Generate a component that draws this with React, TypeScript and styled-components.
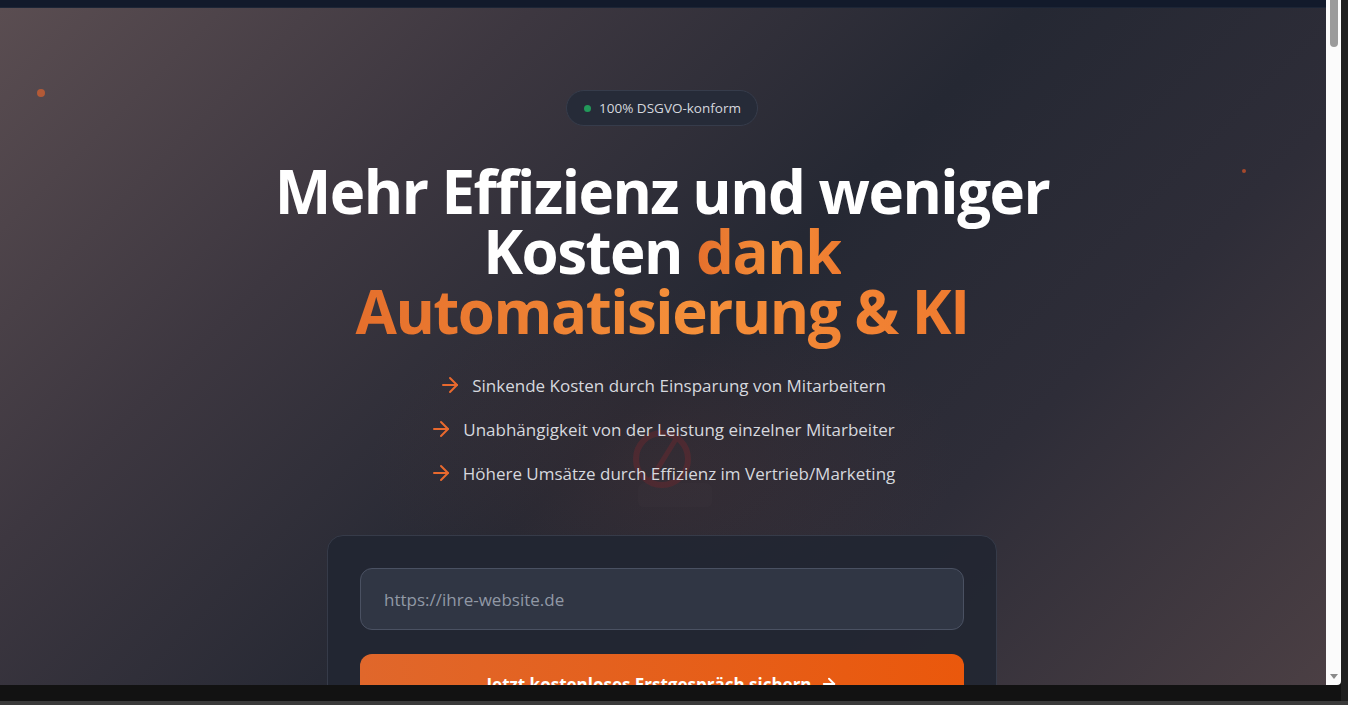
import React from "react";
import styled, { createGlobalStyle } from "styled-components";
import { ArrowRight } from "lucide-react";

const GlobalStyle = createGlobalStyle`
  html, body { margin: 0; padding: 0; background: #121212; overflow: hidden; }
  * { box-sizing: border-box; }
`;

const Screen = styled.div`
  display: grid;
  grid-template-columns: 1326px 15px 7px;
  grid-template-rows: 685px 16px 4px;
  width: 1348px;
  height: 705px;
  background: #121212;
`;

const Viewport = styled.div`
  grid-column: 1;
  grid-row: 1;
  overflow: hidden;
  display: flex;
  flex-direction: column;
  font-family: "Open Sans", "Noto Sans", sans-serif;
`;

const Scrollbar = styled.div`
  grid-column: 2;
  grid-row: 1;
  background: #fbfbfb;
  display: flex;
  flex-direction: column;
  justify-content: space-between;
  align-items: center;
  padding: 0 0 6px;
  border-bottom-right-radius: 4px;
`;

const Thumb = styled.div`
  width: 8px;
  height: 47px;
  background: #9b9b9b;
  border-radius: 0 0 4px 4px;
`;

const DownArrow = styled.div`
  width: 0;
  height: 0;
  border-left: 4px solid transparent;
  border-right: 4px solid transparent;
  border-top: 5px solid #8a8a8a;
`;

const SideStrip = styled.div`
  grid-column: 3;
  grid-row: 1 / span 2;
  background: #1f1f1f;
`;

const BottomStrip = styled.div`
  grid-column: 1 / span 3;
  grid-row: 3;
  background: #3a3a3a;
`;

const TopNav = styled.div`
  height: 8px;
  flex-shrink: 0;
  background: #121a2b;
  border-bottom: 1px solid #1c2536;
`;

const Hero = styled.section`
  position: relative;
  flex: 1;
  display: flex;
  flex-direction: column;
  align-items: center;
  padding-top: 82px;
  padding-right: 2px;
  background:
    radial-gradient(ellipse 420px 260px at 50% 62%, rgba(120, 60, 50, 0.16), transparent 70%),
    linear-gradient(135deg, #5a4d51 0%, #3d3740 26%, #252833 50%, #2e2d38 70%, #4e4145 100%);
`;

const Dot = styled.span<{ $size: number; $color: string }>`
  position: absolute;
  width: ${(p) => p.$size}px;
  height: ${(p) => p.$size}px;
  border-radius: 50%;
  background: ${(p) => p.$color};
`;

const Badge = styled.div`
  display: flex;
  align-items: center;
  gap: 8px;
  height: 36px;
  padding: 0 16px 0 17px;
  border-radius: 999px;
  background: #262b38;
  border: 1px solid #363c4b;
  color: #d5d8de;
  font-size: 13.5px;
`;

const GreenDot = styled.span`
  width: 7px;
  height: 7px;
  border-radius: 50%;
  background: #22995a;
`;

const Heading = styled.h1`
  margin: 35px 0 0;
  text-align: center;
  font-size: 60px;
  line-height: 60px;
  font-weight: 700;
  color: #ffffff;
  letter-spacing: -1.5px;
`;

const Accent = styled.span`
  background: linear-gradient(90deg, #e56f2c 0%, #f5903a 55%, #ef7a2f 100%);
  -webkit-background-clip: text;
  background-clip: text;
  color: transparent;
`;

const Bullets = styled.ul`
  position: relative;
  list-style: none;
  margin: 30px 0 0;
  padding: 0;
  display: flex;
  flex-direction: column;
  align-items: center;
  gap: 16px;
`;

const Bullet = styled.li`
  display: flex;
  align-items: center;
  gap: 10px;
  height: 28px;
  font-size: 17px;
  color: #d6d8de;
  z-index: 1;
`;

const Watermark = styled.svg`
  position: absolute;
  left: 50%;
  top: 58px;
  margin-left: -34px;
  opacity: 0.2;
`;

const Card = styled.div`
  margin-top: 48px;
  width: 670px;
  padding: 32px;
  border-radius: 16px;
  background: rgba(34, 38, 50, 0.92);
  border: 1px solid #363b49;
  display: flex;
  flex-direction: column;
  gap: 24px;
`;

const Input = styled.input`
  height: 62px;
  width: 100%;
  padding: 0 23px;
  border-radius: 12px;
  background: #303644;
  border: 1px solid #4a5162;
  color: #e5e7eb;
  font-family: "Open Sans", "Noto Sans", sans-serif;
  font-size: 17px;
  outline: none;
  &::placeholder { color: #9199a6; }
`;

const Button = styled.button`
  height: 60px;
  width: 100%;
  border: none;
  border-radius: 12px;
  background: linear-gradient(90deg, #e0672b 0%, #ea580c 100%);
  color: #ffffff;
  font-family: "Open Sans", "Noto Sans", sans-serif;
  font-size: 17px;
  font-weight: 700;
  display: flex;
  align-items: center;
  justify-content: center;
  gap: 8px;
`;

const bullets = [
  "Sinkende Kosten durch Einsparung von Mitarbeitern",
  "Unabhängigkeit von der Leistung einzelner Mitarbeiter",
  "Höhere Umsätze durch Effizienz im Vertrieb/Marketing",
];

export default function App() {
  return (
    <>
      <GlobalStyle />
      <Screen>
        <Viewport>
          <TopNav />
          <Hero>
            <Dot $size={8} $color="#b35a37" style={{ left: 37, top: 81 }} />
            <Dot $size={4} $color="#a5492c" style={{ left: 1242, top: 161 }} />
            <Badge>
              <GreenDot />
              100% DSGVO-konform
            </Badge>
            <Heading>
              Mehr Effizienz und weniger
              <br />
              Kosten <Accent>dank</Accent>
              <br />
              <Accent>Automatisierung &amp; KI</Accent>
            </Heading>
            <Bullets>
              <Watermark width="90" height="80" viewBox="0 0 90 80">
                <path d="M10 62 Q10 54 18 54 L76 54 Q84 54 84 62 L84 72 Q84 78 78 78 L16 78 Q10 78 10 72 Z" fill="#5b5057" opacity="0.35" />
                <circle cx="34" cy="30" r="26" fill="none" stroke="#b8262a" strokeWidth="6" />
                <line x1="48" y1="10" x2="22" y2="52" stroke="#b8262a" strokeWidth="5" />
              </Watermark>
              {bullets.map((b) => (
                <Bullet key={b}>
                  <ArrowRight size={24} color="#e8692e" strokeWidth={2} />
                  {b}
                </Bullet>
              ))}
            </Bullets>
            <Card>
              <Input placeholder="https://ihre-website.de" />
              <Button>
                Jetzt kostenloses Erstgespräch sichern
                <ArrowRight size={18} strokeWidth={2.5} />
              </Button>
            </Card>
          </Hero>
        </Viewport>
        <Scrollbar>
          <Thumb />
          <DownArrow />
        </Scrollbar>
        <SideStrip />
        <BottomStrip />
      </Screen>
    </>
  );
}
